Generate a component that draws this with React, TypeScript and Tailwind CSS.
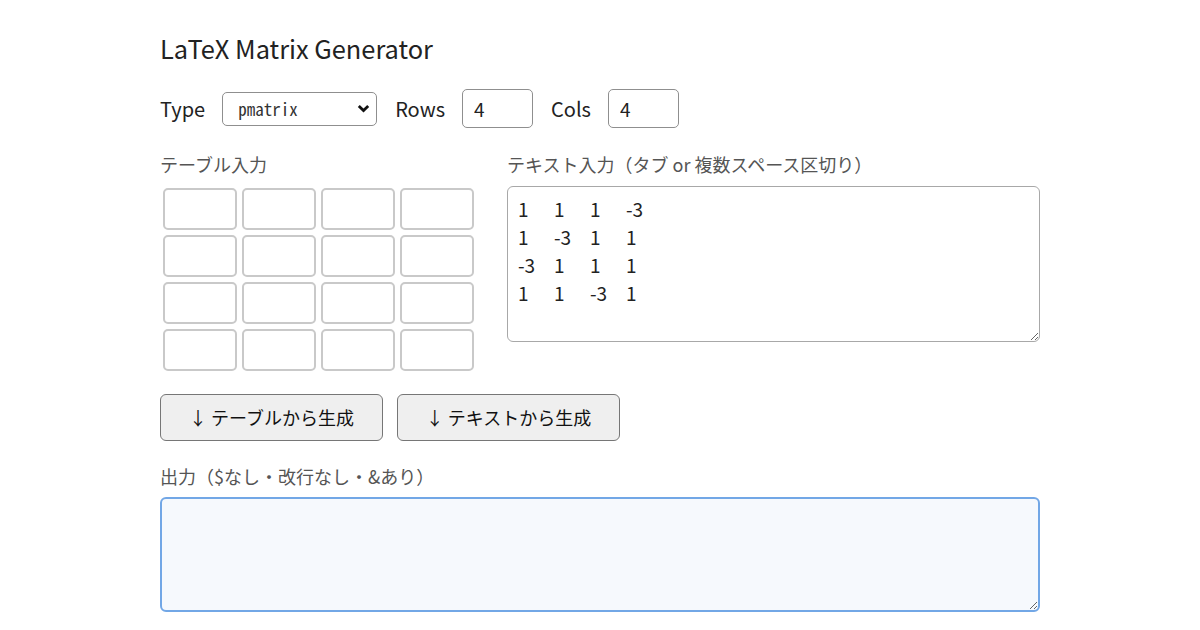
import React, { useState } from 'react';

const MATRIX_TEXT = '1\t1\t1\t-3\n1\t-3\t1\t1\n-3\t1\t1\t1\n1\t1\t-3\t1';

export default function App() {
    const [type, setType] = useState('pmatrix');
    const [rows, setRows] = useState('4');
    const [cols, setCols] = useState('4');
    const [text, setText] = useState(MATRIX_TEXT);
    const [output, setOutput] = useState('');

    const cells = Array.from({ length: 16 }, (_, i) => i);

    return (
        <div className="min-h-screen bg-white font-['Noto_Sans_CJK_JP','Noto_Sans',sans-serif] text-[#222]">
            <div className="mx-auto w-[880px] pt-[30px]">
                <h1 className="text-[25.4px] leading-[36px] text-[#222]">LaTeX Matrix Generator</h1>

                {/* Type / Rows / Cols */}
                <div className="mt-[23px] flex items-center text-[20px]">
                    <span>Type</span>
                    <div className="relative ml-[17px]">
                        <select
                            value={type}
                            onChange={(e) => setType(e.target.value)}
                            className="h-[34px] w-[155px] appearance-none rounded-[5px] border border-[#8f8f8f] bg-white pl-[15px] font-['Noto_Sans_Mono_CJK_JP','DejaVu_Sans_Mono',monospace] text-[17px] text-[#333]"
                        >
                            <option>pmatrix</option>
                            <option>bmatrix</option>
                            <option>vmatrix</option>
                            <option>matrix</option>
                        </select>
                        <svg className="pointer-events-none absolute right-[7px] top-[12px]" width="13" height="10" viewBox="0 0 13 10">
                            <path d="M1.8 2 L6.5 6.6 L11.2 2" fill="none" stroke="#111" strokeWidth="2.8" />
                        </svg>
                    </div>
                    <span className="ml-[18px]">Rows</span>
                    <input
                        value={rows}
                        onChange={(e) => setRows(e.target.value)}
                        className="ml-[17px] h-[39px] w-[71px] rounded-[5px] border border-[#8f8f8f] px-[11px] text-[19px] outline-none"
                    />
                    <span className="ml-[18px]">Cols</span>
                    <input
                        value={cols}
                        onChange={(e) => setCols(e.target.value)}
                        className="ml-[17px] h-[39px] w-[71px] rounded-[5px] border border-[#8f8f8f] px-[11px] text-[19px] outline-none"
                    />
                </div>

                {/* Inputs */}
                <div className="mt-[23px] flex gap-[32px]">
                    <div className="w-[315px]">
                        <div className="text-[18px] leading-[26px] text-[#555]">テーブル入力</div>
                        <div className="mt-[11px] ml-[3px] grid grid-cols-[repeat(4,74px)] gap-x-[5px] gap-y-[5px]">
                            {cells.map((c) => (
                                <input
                                    key={c}
                                    className="h-[42px] w-[74px] rounded-[5px] border-2 border-[#c9c9c9] px-2 text-[18px] outline-none"
                                />
                            ))}
                        </div>
                    </div>
                    <div className="flex-1">
                        <div className="text-[18px] leading-[26px] text-[#555]">テキスト入力（タブ or 複数スペース区切り）</div>
                        <textarea
                            value={text}
                            onChange={(e) => setText(e.target.value)}
                            className="mt-[9px] block h-[156px] w-[533px] rounded-[6px] border border-[#a8a8a8] px-[10px] pt-[8px] pb-[9px] text-[19px] leading-[28px] text-[#222] outline-none [tab-size:36px]"
                        />
                    </div>
                </div>

                {/* Buttons */}
                <div className="mt-[23px] flex gap-[14px]">
                    <button className="h-[47px] w-[223px] rounded-[6px] border-[1.5px] border-[#767676] bg-[#efefef] text-[18px] text-[#111]">
                        ↓ テーブルから生成
                    </button>
                    <button className="h-[47px] w-[223px] rounded-[6px] border-[1.5px] border-[#767676] bg-[#efefef] text-[18px] text-[#111]">
                        ↓ テキストから生成
                    </button>
                </div>

                {/* Output */}
                <div className="mt-[22px] text-[18px] leading-[26px] text-[#555]">出力（$なし・改行なし・&amp;あり）</div>
                <textarea
                    value={output}
                    onChange={(e) => setOutput(e.target.value)}
                    className="mt-[8px] block h-[115px] w-[880px] rounded-[6px] border-2 border-[#72a7e6] bg-[#f6f9fd] px-[10px] py-[9px] text-[18px] outline-none"
                />
            </div>
        </div>
    );
}
